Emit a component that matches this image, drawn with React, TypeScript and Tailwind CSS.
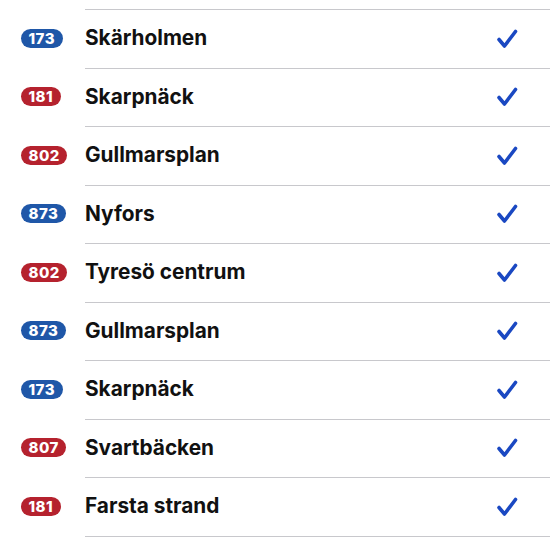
import React from "react";

type Row = { num: string; color: "blue" | "red"; name: string };

const rows: Row[] = [
  { num: "173", color: "blue", name: "Skärholmen" },
  { num: "181", color: "red", name: "Skarpnäck" },
  { num: "802", color: "red", name: "Gullmarsplan" },
  { num: "873", color: "blue", name: "Nyfors" },
  { num: "802", color: "red", name: "Tyresö centrum" },
  { num: "873", color: "blue", name: "Gullmarsplan" },
  { num: "173", color: "blue", name: "Skarpnäck" },
  { num: "807", color: "red", name: "Svartbäcken" },
  { num: "181", color: "red", name: "Farsta strand" },
];

function Check() {
  return (
    <svg width="22" height="20" viewBox="0 0 22 20" fill="none">
      <path
        d="M3 10.5 L8.5 17 L19.5 2.5"
        stroke="#1a48c2"
        strokeWidth="3.6"
        strokeLinecap="round"
        strokeLinejoin="round"
      />
    </svg>
  );
}

export default function App() {
  return (
    <div
      className="w-[550px] h-[550px] bg-white overflow-hidden pt-[9px]"
      style={{ fontFamily: "Inter, 'Liberation Sans', sans-serif" }}
    >
      {rows.map((r, i) => (
        <div key={i} className="flex h-[58.5px]">
          <div className="w-[85px] flex items-center pl-[21px]">
            <span
              className={`h-[19px] rounded-full px-[7.5px] flex items-center text-white text-[15px] font-extrabold leading-none tracking-[0.5px] ${
                r.color === "blue" ? "bg-[#1f57a8]" : "bg-[#b5222e]"
              }`}
            >
              {r.num}
            </span>
          </div>
          <div className="flex-1 flex items-center border-t border-[#c8c8cc] pr-[32px]">
            <span className="flex-1 text-[20.8px] font-bold text-[#111111] leading-none">
              {r.name}
            </span>
            <Check />
          </div>
        </div>
      ))}
      <div className="ml-[85px] border-t border-[#c8c8cc]" />
    </div>
  );
}
